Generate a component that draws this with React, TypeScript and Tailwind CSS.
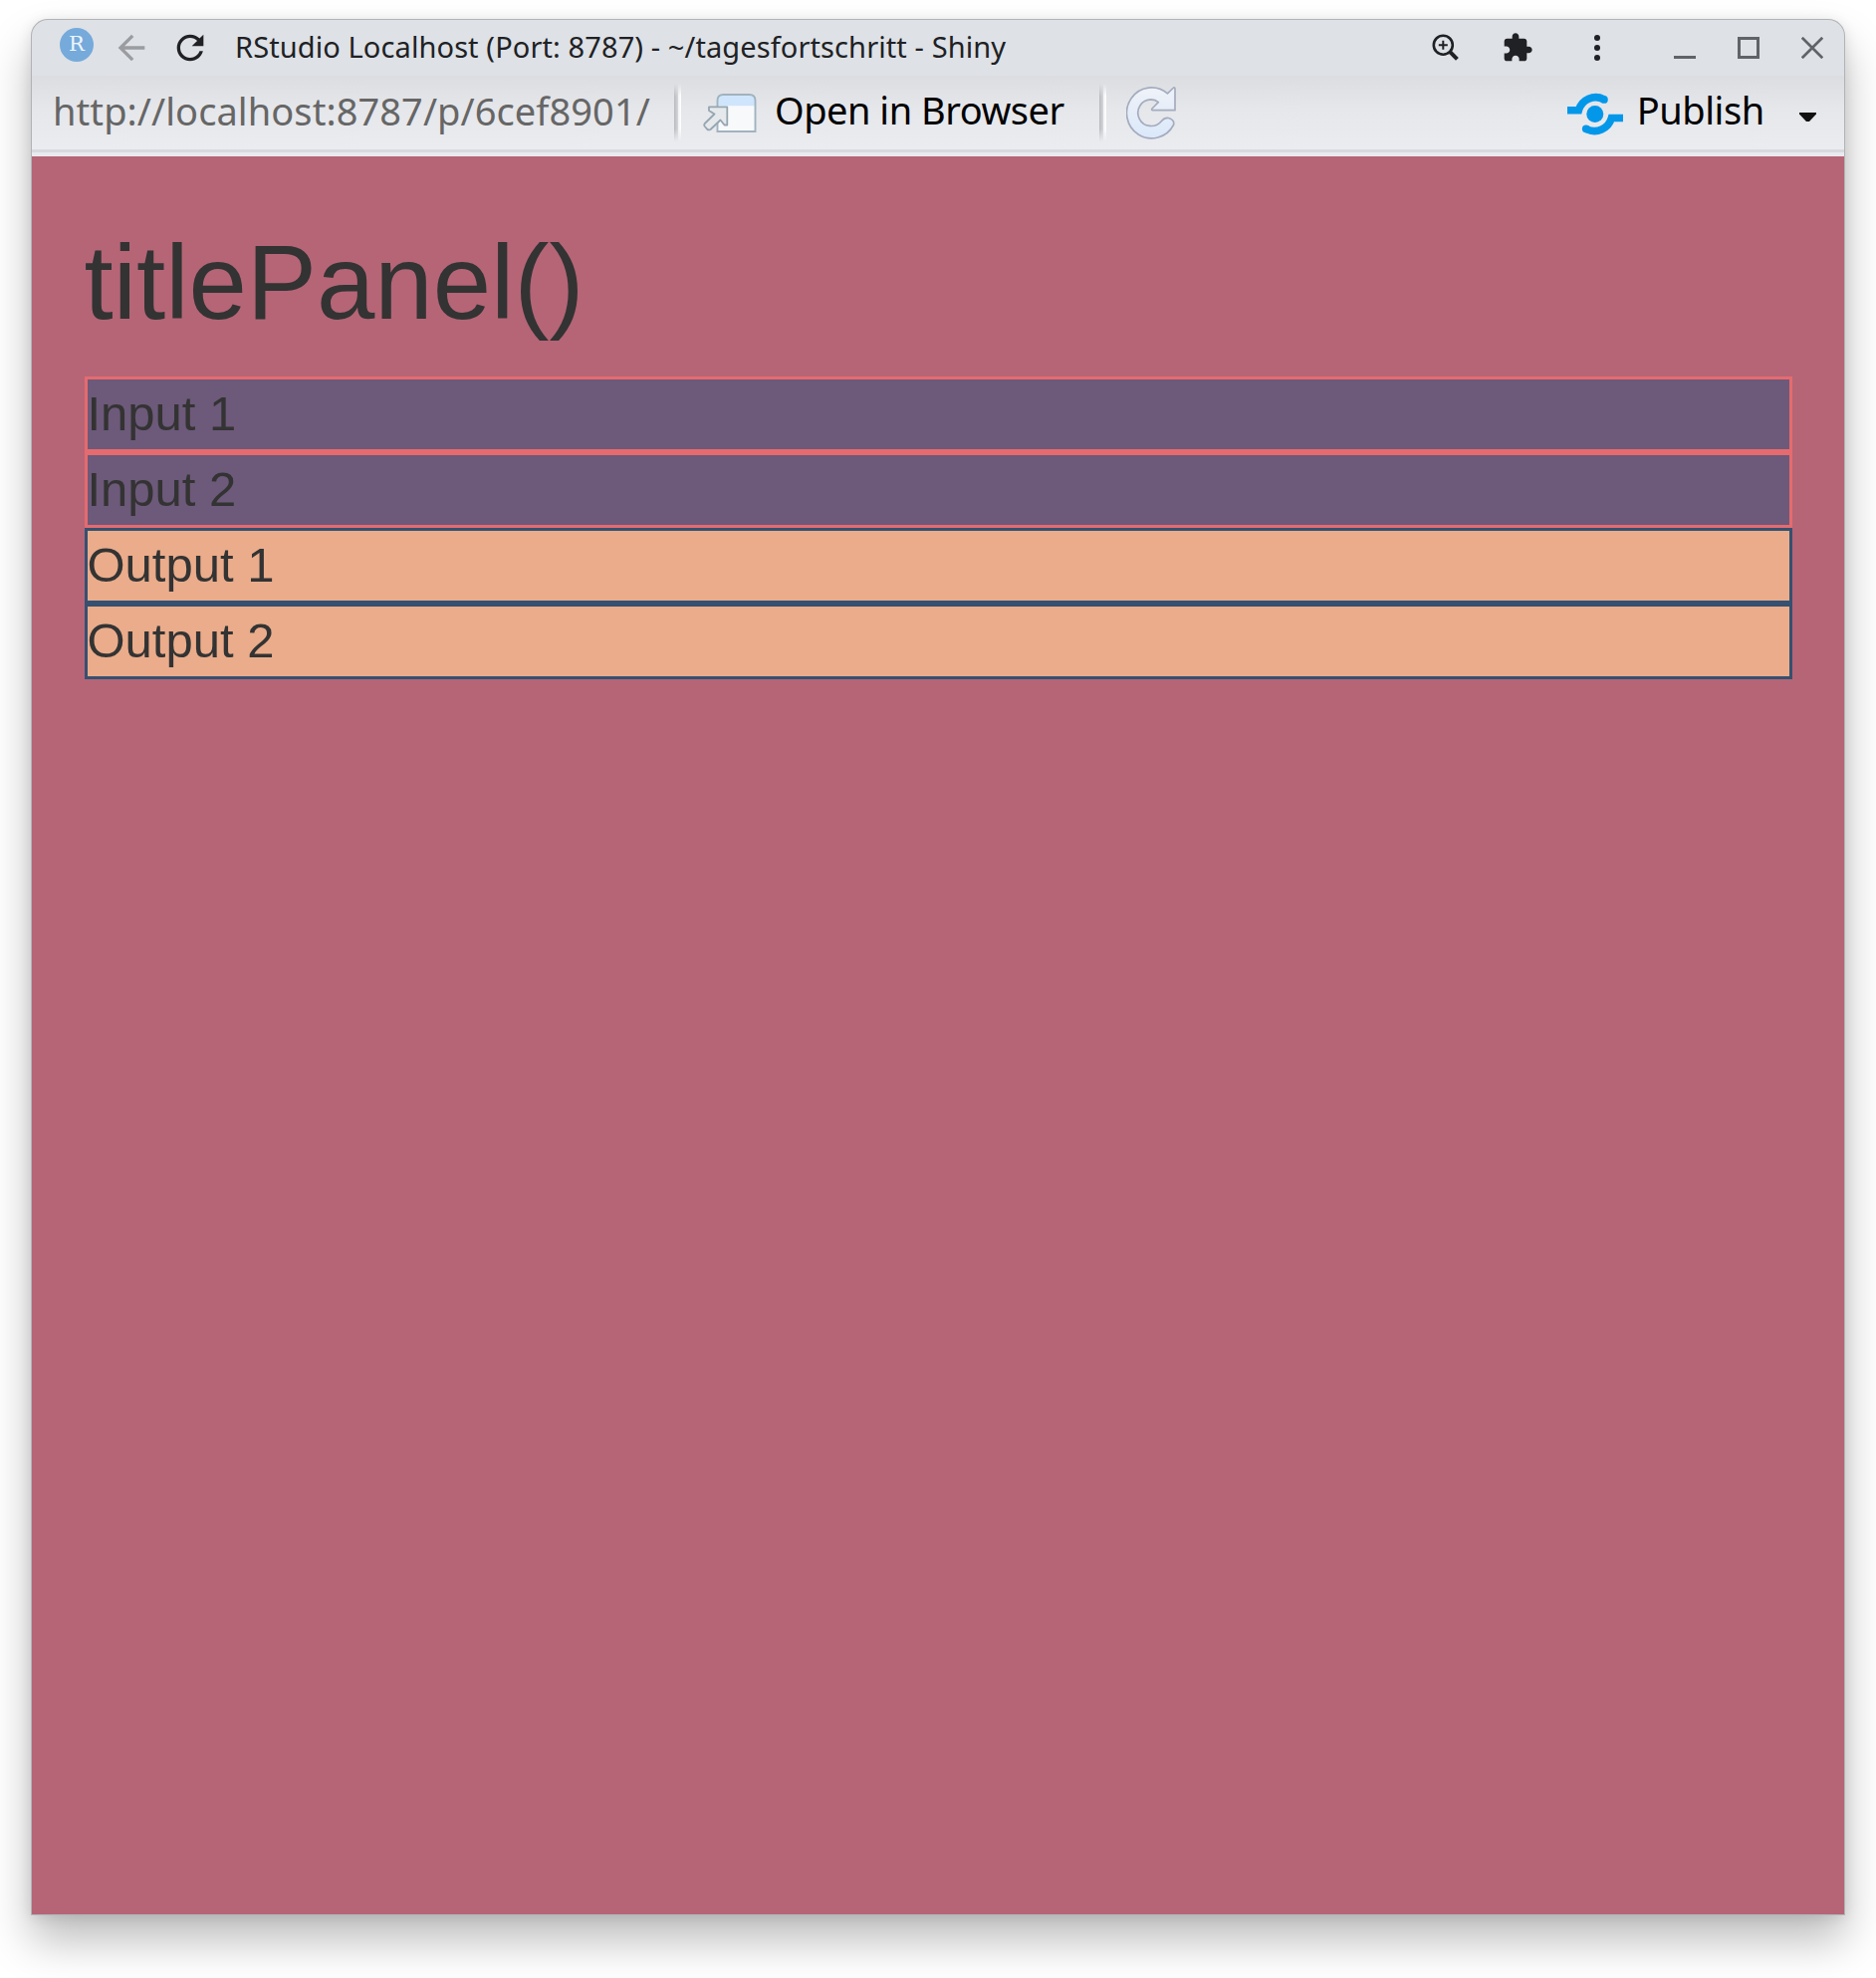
const ROWS = [
  { label: "Input 1", tone: "border-[#e56b6f] bg-[#6d597a]" },
  { label: "Input 2", tone: "border-[#e56b6f] bg-[#6d597a]" },
  { label: "Output 1", tone: "border-[#355070] bg-[#eaac8b]" },
  { label: "Output 2", tone: "border-[#355070] bg-[#eaac8b]" },
];

function BackIcon() {
  return (
    <svg className="mt-[7.7px] ml-[18px] size-10 shrink-0" viewBox="0 0 24 24" fill="#9a9ca0">
      <path d="M20 11H7.83l5.59-5.59L12 4l-8 8 8 8 1.41-1.41L7.83 13H20v-2z" />
    </svg>
  );
}

function ReloadIcon() {
  return (
    <svg className="mt-2 ml-[18.5px] size-10 shrink-0" viewBox="0 0 24 24" fill="#202124">
      <path d="M17.65 6.35C16.2 4.9 14.21 4 12 4c-4.42 0-7.99 3.58-7.99 8s3.57 8 7.99 8c3.73 0 6.84-2.55 7.73-6h-2.08c-.82 2.33-3.04 4-5.65 4-3.31 0-6-2.69-6-6s2.69-6 6-6c1.66 0 3.14.69 4.22 1.78L13 11h7V4l-2.35 2.35z" />
    </svg>
  );
}

function ZoomIcon() {
  return (
    <svg className="mt-[14px] size-7 shrink-0" viewBox="0 0 28 28" fill="none" stroke="#202124">
      <circle cx="11.3" cy="11.2" r="9.5" strokeWidth="2.6" />
      <path d="M6.8 11.2H15.8M11.3 6.7V15.7" strokeWidth="2" />
      <path d="M18 17.9L25.4 25.3" strokeWidth="4" />
    </svg>
  );
}

function ExtensionIcon() {
  return (
    <svg className="mt-3 ml-[42px] size-8 shrink-0" viewBox="0 0 24 24" fill="#202124">
      <path d="M20.5 11H19V7c0-1.1-.9-2-2-2h-4V3.5C13 2.12 11.88 1 10.5 1S8 2.12 8 3.5V5H4c-1.1 0-1.99.9-1.99 2v3.8H3.5c1.49 0 2.7 1.21 2.7 2.7s-1.21 2.7-2.7 2.7H2V20c0 1.1.9 2 2 2h3.8v-1.5c0-1.49 1.21-2.7 2.7-2.7 1.49 0 2.7 1.21 2.7 2.7V22H17c1.1 0 2-.9 2-2v-4h1.5c1.38 0 2.5-1.12 2.5-2.5S21.88 11 20.5 11z" />
    </svg>
  );
}

function OpenIcon() {
  return (
    <svg className="ml-[22px] mb-[-1px] h-10 w-[54px] shrink-0" viewBox="0 0 54 40">
      <path d="M14.5 38V7q0-6 6-6H46.5q6 0 6 6V38z" fill="#f8f9fb" />
      <path d="M14.5 12.3V7q0-6 6-6H46.5q6 0 6 6V12.3z" fill="#cfe5fc" />
      <path d="M14.5 38V7q0-6 6-6H46.5q6 0 6 6V38z" fill="none" stroke="#a0b3bf" strokeWidth="1.9" />
      <path
        d="M6 13.4H24.3V31.5H21.5L17.5 26.5 7.5 36Q5.500 37 4 35.500L1.800 33Q.600 31.500 1.800 30L11.500 20.500 6 17z"
        fill="#e6e9ec"
        stroke="#95a6b1"
        strokeWidth="1.8"
        strokeLinejoin="round"
      />
    </svg>
  );
}

function RefreshIcon() {
  return (
    <svg className="ml-5 h-[53px] w-[50px] shrink-0" viewBox="0 0 50 53">
      <defs>
        <linearGradient id="refreshFill" x1="0" y1="0" x2="0" y2="1">
          <stop offset="0" stopColor="#eff2f8" />
          <stop offset="1" stopColor="#dbe8fa" />
        </linearGradient>
      </defs>
      <path
        d="M41.5 6.8L47.6 1Q49 .5 49 2.5V23.7H26.5Q25 23.3 26 22L32.3 15.7Q29.5 13 25 12.9A13.3 13.3 0 1 0 35.5 34.5Q38.5 31 42.5 31.5 49 33.5 47.5 38.5A25 25.5 0 1 1 41.5 6.800z"
        fill="url(#refreshFill)"
        stroke="#a4acbe"
        strokeWidth="1.7"
        strokeLinejoin="round"
      />
    </svg>
  );
}

function PublishIcon() {
  return (
    <svg className="mb-[-2px] h-[43px] w-14 shrink-0" viewBox="0 0 56 43">
      <circle cx="27.8" cy="21.6" r="8.5" fill="#0397ea" />
      <g fill="none" stroke="#0397ea" strokeWidth="7.6">
        <path d="M0 17.7H11.4A17.8 17.8 0 0 1 36.5 6.6" />
        <path d="M56 25.5H44.4A17.8 17.8 0 0 1 19.3 36.6" />
      </g>
      <circle cx="36.9" cy="6.9" r="3.9" fill="#0397ea" />
      <circle cx="18.8" cy="36.3" r="3.9" fill="#0397ea" />
    </svg>
  );
}

function Separator() {
  return (
    <div className="flex h-[58px] w-[7px] shrink-0 [mask-image:linear-gradient(to_bottom,transparent,black_22%,black_78%,transparent)]">
      <div className="w-1 bg-linear-to-r from-[#b8babd] to-[#d5d7da]" />
      <div className="w-[3px] bg-linear-to-r from-[#f0f1f3] to-white" />
    </div>
  );
}

function TitleBar() {
  return (
    <header className="flex h-14 items-start bg-[#dee1e6]">
      <div className="mt-2 ml-7 flex size-[34px] shrink-0 items-center justify-center rounded-full bg-[#75aadb] pb-0.5 font-['DejaVu_Serif',serif] text-[21px] leading-none text-[#eef4fb]">
        R
      </div>
      <BackIcon />
      <ReloadIcon />
      <h1 className="ml-[25.5px] text-[29px] leading-[54px] tracking-[0.1px] whitespace-nowrap text-[#202124]">
        RStudio Localhost (Port: 8787) - ~/tagesfortschritt - Shiny
      </h1>
      <div className="mr-[21px] ml-auto flex">
        <ZoomIcon />
        <ExtensionIcon />
        <div className="mt-[15px] ml-[61px] flex flex-col gap-1">
          <i className="size-1.5 rounded-full bg-[#202124]" />
          <i className="size-1.5 rounded-full bg-[#202124]" />
          <i className="size-1.5 rounded-full bg-[#202124]" />
        </div>
        <div className="mt-9 ml-[74px] h-[3px] w-[22px] bg-[#606368]" />
        <div className="mt-[17px] ml-[42px] size-[22px] border-3 border-[#606368]" />
        <svg className="mt-[17px] ml-[42px] size-[22px]" viewBox="0 0 22 22" stroke="#606368" strokeWidth="2.7">
          <path d="M.8 .8L21.2 21.2M21.2 .8L.8 21.2" />
        </svg>
      </div>
    </header>
  );
}

function Toolbar() {
  return (
    <div className="flex h-[81px] flex-col">
      <div className="flex h-[74px] items-center bg-linear-to-b from-[#dcdde1] via-[#e6e7eb] via-45% to-[#ebecf0] pl-[21px] text-[38px] leading-[74px] whitespace-nowrap text-black">
        <div className="w-[624px] shrink-0 pb-1 tracking-[0.07px] text-[#666]">http://localhost:8787/p/6cef8901/</div>
        <Separator />
        <OpenIcon />
        <div className="ml-[18px] w-[326px] shrink-0 pb-1.5 tracking-[-0.5px]">Open in Browser</div>
        <Separator />
        <RefreshIcon />
        <div className="mr-7 ml-auto flex items-center">
          <PublishIcon />
          <div className="ml-[13.7px] w-[163.3px] pb-1.5 tracking-[-0.45px]">Publish</div>
          <svg className="mt-2 h-[9px] w-[17px]" viewBox="0 0 17 9" fill="#111">
            <path d="M0 0H17V1.5L10 9H7L0 1.5z" />
          </svg>
        </div>
      </div>
      <div className="h-[3px] bg-[#d6dadf]" />
      <div className="h-1 bg-[#e8eaef]" />
    </div>
  );
}

export default function App() {
  return (
    <div className="h-[1986px] w-[1884px] overflow-hidden bg-white pt-[19px] pl-[31px] font-['Noto_Sans',sans-serif]">
      <div className="h-[1904px] w-[1822px] rounded-t-[17px] bg-[#b2b3b5] p-px shadow-[0_26px_44px_rgba(0,0,0,0.26),0_2px_14px_rgba(0,0,0,0.1)]">
        <div className="flex h-full flex-col overflow-hidden rounded-t-[16px]">
          <TitleBar />
          <Toolbar />
          <main className="flex-1 bg-[#b56576] px-[52.5px] pt-[69px] font-['Liberation_Sans',sans-serif] text-[#333]">
            <h2 className="mb-9 text-[105px] leading-[115.5px]">titlePanel()</h2>
            {ROWS.map((row) => (
              <div key={row.label} className={`h-[76px] border-3 text-[49px] leading-[68px] ${row.tone}`}>
                {row.label}
              </div>
            ))}
          </main>
        </div>
      </div>
    </div>
  );
}
